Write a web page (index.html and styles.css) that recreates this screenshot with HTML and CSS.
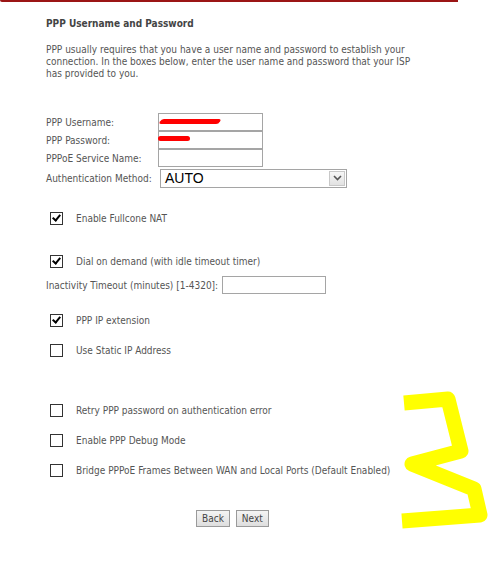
FILE: index.html
```html
<!DOCTYPE html>
<html>
<head>
<meta charset="utf-8">
<link rel="stylesheet" href="styles.css">
</head>
<body>
<div class="topline"></div>
<div class="page">
  <div class="title">PPP Username and Password</div>
  <p class="intro">PPP usually requires that you have a user name and password to establish your connection. In the boxes below, enter the user name and password that your ISP has provided to you.</p>

  <div class="fields">
    <div class="frow"><span class="flabel">PPP Username:</span><span class="box"><span class="scrib s1"></span></span></div>
    <div class="frow"><span class="flabel">PPP Password:</span><span class="box"><span class="scrib s2"></span></span></div>
    <div class="frow"><span class="flabel">PPPoE Service Name:</span><span class="box"></span></div>
    <div class="arow"><span class="alabel">Authentication Method:</span>
      <span class="select"><span class="selval">AUTO</span><span class="arrow"><svg width="9" height="6" viewBox="0 0 9 6"><path d="M1 1 L4.5 4.5 L8 1" fill="none" stroke="#555" stroke-width="1.6"/></svg></span></span>
    </div>
  </div>

  <div class="check c-nat"><span class="cb on"></span><span>Enable Fullcone NAT</span></div>
  <div class="check c-dial"><span class="cb on"></span><span>Dial on demand (with idle timeout timer)</span></div>
  <div class="trow"><span>Inactivity Timeout (minutes) [1-4320]:</span><span class="box tbox"></span></div>
  <div class="check c-ipext"><span class="cb on"></span><span>PPP IP extension</span></div>
  <div class="check c-static"><span class="cb"></span><span>Use Static IP Address</span></div>
  <div class="check c-retry"><span class="cb"></span><span>Retry PPP password on authentication error</span></div>
  <div class="check c-debug"><span class="cb"></span><span>Enable PPP Debug Mode</span></div>
  <div class="check c-bridge"><span class="cb"></span><span>Bridge PPPoE Frames Between WAN and Local Ports (Default Enabled)</span></div>

  <div class="buttons"><span class="btn">Back</span><span class="btn">Next</span></div>
</div>
<svg class="three" width="488" height="573" viewBox="0 0 488 573">
  <polyline points="404,403 448,399 461,451 412,464 474,489 480,515 402,521" fill="none" stroke="#ffff00" stroke-width="15" stroke-linejoin="round" stroke-linecap="butt"/>
</svg>
</body>
</html>
```
FILE: styles.css
```css
html, body { margin: 0; padding: 0; background: #fff; }
body { font-family: "DejaVu Sans Condensed", "DejaVu Sans", sans-serif; font-size: 10px; color: #555; position: relative; width: 488px; height: 573px; overflow: hidden; }
.topline { width: 458px; height: 2px; background: #9b1515; border-bottom-left-radius: 2px; }
.page { padding-left: 46px; }
.title { font-weight: bold; color: #444; margin-top: 15px; height: 14px; line-height: 14px; }
.intro { margin: 13px 0 0; width: 370px; line-height: 12px; }
.fields { margin-top: 33px; }
.frow { display: flex; height: 18px; align-items: center; white-space: nowrap; }
.flabel { width: 112px; }
.box { width: 103px; height: 16px; border: 1px solid #a5a5a5; background: #fff; position: relative; }
.scrib { position: absolute; background: #f00; border-radius: 4px; }
.s1 { left: 1px; top: 5px; width: 60px; height: 5px; transform: skewX(-30deg); }
.s2 { left: -1px; top: 4px; width: 32px; height: 5px; }
.arow { display: flex; align-items: center; margin-top: 1px; height: 20px; white-space: nowrap; }
.alabel { width: 114px; }
.select { width: 185px; height: 17px; border: 1px solid #a5a5a5; display: flex; align-items: center; justify-content: space-between; }
.selval { font-family: "Liberation Sans", Arial, sans-serif; font-size: 14px; color: #000; padding-left: 4px; }
.arrow { width: 16px; height: 15px; margin-right: 1px; border: 1px solid #c8c8c8; background: linear-gradient(#f6f6f6, #e2e2e2); display: flex; align-items: center; justify-content: center; box-sizing: border-box; }
.check { display: flex; align-items: center; height: 14px; padding-left: 4px; white-space: nowrap; }
.cb { width: 11px; height: 11px; border: 1px solid #333; margin-right: 13px; position: relative; background: #fff; flex: none; }
.cb.on::after { content: ""; position: absolute; left: 3px; top: 0px; width: 3px; height: 6px; border-right: 2.5px solid #000; border-bottom: 2.5px solid #000; transform: rotate(40deg); }
.c-nat { margin-top: 23px; }
.c-dial { margin-top: 29px; }
.trow { display: flex; align-items: center; height: 18px; margin-top: 8px; white-space: nowrap; }
.tbox { margin-left: 4px; width: 102px; }
.c-ipext { margin-top: 19px; }
.c-static { margin-top: 16px; }
.c-retry { margin-top: 46px; }
.c-debug { margin-top: 16px; }
.c-bridge { margin-top: 16px; }
.buttons { display: flex; gap: 6px; margin-top: 33px; margin-left: 150px; }
.btn { border: 1px solid #9a9a9a; background: linear-gradient(#f4f4f4, #dedede); color: #444; padding: 1px 5px; height: 13px; line-height: 13px; }
.three { position: absolute; left: 0; top: 0; pointer-events: none; }
```
